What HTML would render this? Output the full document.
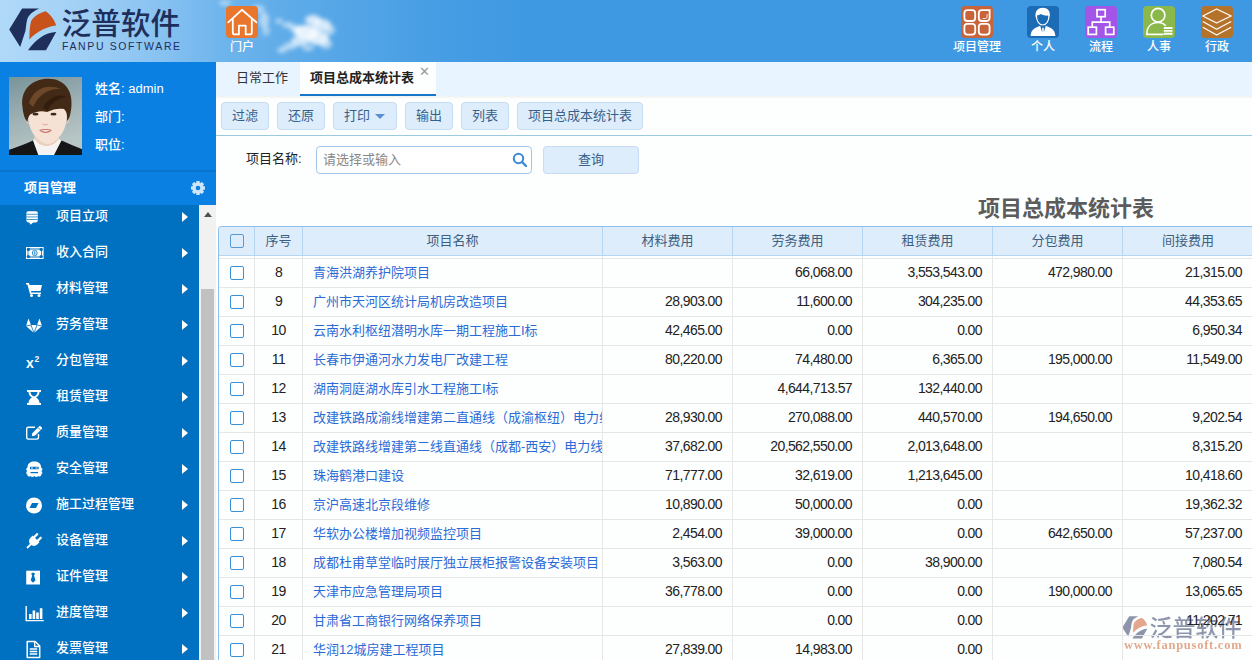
<!DOCTYPE html>
<html lang="zh-CN">
<head>
<meta charset="utf-8">
<title>项目总成本统计表</title>
<style>
*{box-sizing:border-box;margin:0;padding:0}
html,body{width:1252px;height:660px;overflow:hidden;background:#fdfefe}
body{font-family:"Liberation Sans","Noto Sans CJK SC",sans-serif;font-size:13px;color:#333;position:relative}
.abs{position:absolute}
/* header */
#hdr{position:absolute;left:0;top:0;width:1252px;height:62px;background:linear-gradient(90deg,#b0d9f8 0px,#a2d0f5 80px,#88c2f1 160px,#6fb5ed 220px,#60ace9 280px,#55a6e7 340px,#4ca1e5 400px,#449ce3 460px,#3f99e2 530px,#3f99e2 1252px);overflow:hidden}
#hdr .logo-cn{position:absolute;left:61.5px;top:6px;font-size:29.7px;line-height:36px;color:#1f2f5c;font-weight:500;letter-spacing:0px;white-space:nowrap}
#hdr .logo-en{position:absolute;left:62px;top:39px;font-size:10.5px;line-height:14px;color:#1f2f5c;letter-spacing:1.62px;white-space:nowrap}
.nav{position:absolute;top:6px;width:60px;text-align:center;color:#fff;font-size:12px;line-height:14px;font-weight:500}
.nav svg{display:block;margin:0 auto 2px}
/* sidebar */
#user{position:absolute;left:0;top:62px;width:216px;height:108px;background:#0a80e3}
#user .t{position:absolute;left:95px;color:#fff;font-size:13px;line-height:16px;white-space:nowrap;font-weight:500}
#mhead{position:absolute;left:0;top:170px;width:216px;height:35px;background:#0a80e3;border-top:2px solid #0a73cc;color:#fff;font-weight:bold;font-size:13px;line-height:32px;padding-left:24px}
#menu{position:absolute;left:0;top:205px;width:199px;height:455px;background:#0070c0;overflow:hidden}
#menu .mi{position:absolute;left:0;width:200px;height:36px;color:#fff;font-size:13px;line-height:36px;padding-left:56px;white-space:nowrap;font-weight:500}
#menu .mi .ar{position:absolute;left:182px;top:14px;width:0;height:0;border-left:6px solid #fff;border-top:5px solid transparent;border-bottom:5px solid transparent}
#menu .mi svg{position:absolute;left:25px;top:10px;overflow:visible}
#sbar{position:absolute;left:199px;top:205px;width:17px;height:455px;background:#f1f1f1}
#sbar .th{position:absolute;left:2px;top:84px;width:13px;height:371px;background:#c1c1c1}
#sbar .up{position:absolute;left:5px;top:7px;width:0;height:0;border-bottom:5px solid #505050;border-left:4px solid transparent;border-right:4px solid transparent}
/* main */
#tabs{position:absolute;left:216px;top:62px;width:1036px;height:34px;background:#e8f4ff}
#tabs .t1{position:absolute;left:20px;top:0;height:34px;line-height:32px;font-size:13px;color:#333}
#tabs .t2{position:absolute;left:84px;top:0;width:136px;height:34px;background:#fdfefe;border-bottom:2px solid #1877c9;line-height:32px;font-size:13px;font-weight:bold;color:#222;padding-left:10px;white-space:nowrap}
#tabs .x{position:absolute;left:119px;top:3px;font-size:13px;line-height:14px;color:#999;font-weight:normal}
#tbar{position:absolute;left:216px;top:96px;width:1036px;height:40px;background:#fdfefe;border-bottom:1px solid #9ccbe0;box-shadow:inset 0 3px 3px -2px rgba(0,0,0,.08)}
.btn{position:absolute;top:6px;height:28px;border:1px solid #c5dcf3;border-radius:4px;background:#deedfb;color:#365f8a;font-size:13px;line-height:25px;text-align:center;white-space:nowrap}
#flt .lbl{position:absolute;left:246px;top:150px;font-size:13px;line-height:18px;color:#222}
#flt .inp{position:absolute;left:316px;top:146px;width:216px;height:28px;border:1px solid #a3c6e8;border-radius:4px;background:#fff;color:#888;font-size:13px;line-height:25px;padding-left:6px}
#title{position:absolute;left:900px;top:194px;width:332px;text-align:center;font-size:22px;font-weight:bold;color:#5c5c5c;line-height:30px;white-space:nowrap}
/* table */
#grid{position:absolute;left:218px;top:226px;width:1034px;height:434px;border-left:1px solid #8ec0ea;border-top:1px solid #8ec0ea;background:transparent;overflow:hidden;z-index:1;border-radius:4px 0 0 0}
#gh{position:absolute;left:0;top:0;width:1034px;height:29px;z-index:2;background:#deedfb;border-bottom:1px solid #b5d6f2}
#gh div{position:absolute;top:0;height:28px;line-height:27px;text-align:center;color:#3d5f80;font-size:13px;border-right:1px solid #b5d6f2}
.cb{position:absolute;left:11px;width:14px;height:14px;border:1px solid #3a8fd9;border-radius:2px;background:#fff}
.row{position:absolute;left:0;width:1034px;height:29px;border-bottom:1px solid #e6e6e6;font-size:13px;line-height:28px;color:#222}
.row div{position:absolute;top:0;height:29px;border-right:1px solid #e6e6e6;white-space:nowrap;overflow:hidden}
.row .c0{left:0;width:36px}
.row .c1{left:36px;width:48px;text-align:center;font-size:14px;letter-spacing:-.6px;line-height:26px}
.row .c2{left:84px;width:300px;padding-left:10px;color:#2a6bd6}
.row .c3{font-size:14px;letter-spacing:-.6px;line-height:26px;left:384px;width:130px;text-align:right;padding-right:10px}
.row .c4{font-size:14px;letter-spacing:-.6px;line-height:26px;left:514px;width:130px;text-align:right;padding-right:10px}
.row .c5{font-size:14px;letter-spacing:-.6px;line-height:26px;left:644px;width:130px;text-align:right;padding-right:10px}
.row .c6{font-size:14px;letter-spacing:-.6px;line-height:26px;left:774px;width:130px;text-align:right;padding-right:10px}
.row .c7{font-size:14px;letter-spacing:-.6px;line-height:26px;left:904px;width:130px;text-align:right;padding-right:11px;border-right:none}
</style>
</head>
<body>
<div id="hdr">
<svg class="abs" style="left:0;top:0" width="1252" height="62" viewBox="0 0 1252 62">
<defs>
<filter id="bl" x="-20%" y="-20%" width="140%" height="140%"><feGaussianBlur stdDeviation="2"/></filter>
</defs>
<g filter="url(#bl)" fill="#fff">
<ellipse cx="225" cy="3" rx="6" ry="2.500" opacity=".5"/>
<ellipse cx="258" cy="9" rx="7" ry="4" opacity=".45"/>
<ellipse cx="264" cy="20" rx="5" ry="8" opacity=".5"/>
<ellipse cx="266" cy="31" rx="4" ry="5" opacity=".4"/>
<ellipse cx="279" cy="21" rx="4" ry="2.500" opacity=".5"/>
<ellipse cx="288" cy="25" rx="6" ry="3" opacity=".55"/>
<ellipse cx="296" cy="29" rx="6" ry="4" opacity=".6"/>
<ellipse cx="313" cy="20" rx="8" ry="5" opacity=".75"/>
<ellipse cx="322" cy="25" rx="9" ry="6" opacity=".75"/>
<ellipse cx="330" cy="30" rx="5" ry="5" opacity=".55"/>
<ellipse cx="306" cy="32" rx="12" ry="7" opacity=".85"/>
<ellipse cx="318" cy="38" rx="11" ry="7" opacity=".8"/>
<ellipse cx="300" cy="41" rx="9" ry="5" opacity=".7"/>
<ellipse cx="326" cy="44" rx="6" ry="5" opacity=".55"/>
<ellipse cx="290" cy="46" rx="7" ry="3.500" opacity=".55"/>
<ellipse cx="282" cy="50" rx="5" ry="3" opacity=".55"/>
<ellipse cx="308" cy="48" rx="6" ry="3" opacity=".5"/>
</g>
<!-- logo mark -->
<g id="lm">
<path d="M9.200 29.600 L22.100 8.500 L39.400 8.500 C33 11 28.500 15 27.200 19.500 C26 24 26 28 25.400 31 L20.200 47 Z" fill="#1f2f5c"/>
<path d="M29.300 39.400 C29.500 33 29.500 27 31 21.600 C33 17 39 13 45.500 11.300 C50 14 54 19 56.200 25.400 C47 26.500 37 31 29.300 39.400 Z" fill="#c8521c"/>
<path d="M28 50.200 L46 50.200 L56.200 31.900 C45 32.500 36 39 28 50.200 Z" fill="#1f2f5c"/>
</g>
</svg>
<div class="logo-cn">泛普软件</div>
<div class="logo-en">FANPU SOFTWARE</div>
<div class="nav" style="left:212px"><svg width="32" height="32" viewBox="0 0 32 32"><rect width="32" height="32" rx="4" fill="#e8762d"/><g fill="none" stroke="#fff" stroke-width="1.800" stroke-linejoin="round" stroke-linecap="round"><path d="M2.200 16.300 L15.900 3.800 L30.400 16.300"/><path d="M6.800 13.500 V26.400 a2 2 0 0 0 2 2 H12.900 V19.700 H19.700 V28.400 H23.800 a2 2 0 0 0 2 -2 V13.500"/></g></svg>门户</div>
<div class="nav" style="left:947px"><svg width="32" height="32" viewBox="0 0 32 32"><rect width="32" height="32" rx="4" fill="#c8643a"/><g fill="none" stroke="#fff" stroke-width="1.800"><rect x="3.400" y="4.200" width="10.800" height="10.800" rx="3"/><path d="M17.800 7.200 a3 3 0 0 1 3 -3 H28.600 V12 a3 3 0 0 1 -3 3 H20.800 a3 3 0 0 1 -3 -3 Z"/><rect x="3.400" y="17.800" width="10.800" height="10.800" rx="3"/><rect x="17.800" y="17.800" width="10.800" height="10.800" rx="3"/></g><path d="M21.500 12.500 H24.500 a1.500 1.500 0 0 0 1.500 -1.500 V8" fill="none" stroke="#fff" stroke-width=".8"/></svg>项目管理</div>
<div class="nav" style="left:1013px"><svg width="32" height="32" viewBox="0 0 32 32"><rect width="32" height="32" rx="4" fill="#1b6bb5"/><path d="M3.600 30 C4 25 6 22.800 11 20.800 L13.200 19.800 L15.200 26.500 L15.200 21.800 L16.800 21.800 L16.800 26.500 L18.800 19.800 L21 20.800 C26 22.800 28 25 28.400 30 Z" fill="#fff"/><path d="M9.400 6 V10 C9.300 15 12 19 15.700 19 C19.400 19 22.100 15 22 10 V6 Z" fill="#1b6bb5"/><path d="M9.400 9 C9.300 15 12 19 15.700 19 C19.400 19 22.100 15 22 9" fill="none" stroke="#fff" stroke-width="1.200"/><path d="M8.700 11.500 C7.600 4.500 11.500 1.800 15.800 1.800 C20.200 1.800 23.800 4.500 22.700 11.500 C22.400 10 21.800 9.300 20.800 9.600 C18.500 9.800 16 9 14 7.900 C12.800 8.800 11 9.300 10.200 9.400 C9.500 9.800 9 10.500 8.700 11.500 Z" fill="#fff"/></svg>个人</div>
<div class="nav" style="left:1071px"><svg width="32" height="32" viewBox="0 0 32 32"><rect width="32" height="32" rx="4" fill="#a355e8"/><g fill="none" stroke="#fff" stroke-width="1.700"><rect x="12" y="3.700" width="8.200" height="7"/><rect x="3.200" y="21.200" width="8.200" height="7.200"/><rect x="20.600" y="21.200" width="8.200" height="7.200"/><path d="M16.100 10.700 V16.200 M7.300 21.200 V16.200 H24.700 V21.200"/></g></svg>流程</div>
<div class="nav" style="left:1129px"><svg width="32" height="32" viewBox="0 0 32 32"><rect width="32" height="32" rx="4" fill="#8ab84a"/><g fill="none" stroke="#fff" stroke-width="1.700"><circle cx="15.100" cy="9.200" r="6.800"/><path d="M3.800 28.400 C3.800 20 9 16.500 15.100 16.500 C18.500 16.500 21 17.800 22.800 19.800"/><path d="M3 28.400 H20.500"/></g><path d="M20.800 22 H29.500 M20.800 24.900 H29.500 M20.800 27.800 H29.500" stroke="#fff" stroke-width="1.900"/></svg>人事</div>
<div class="nav" style="left:1187px"><svg width="32" height="32" viewBox="0 0 32 32"><rect width="32" height="32" rx="4" fill="#b5722a"/><g fill="none" stroke="#fff" stroke-width="1.300" stroke-linejoin="round"><path d="M15.600 3 L30.200 10 L15.600 17 L1.800 10 Z"/><path d="M1.800 15.500 L15.600 23.200 L30.200 15.500"/><path d="M1.800 21.300 L15.600 29 L30.200 21.300"/></g></svg>行政</div>
</div>
<div id="user">
<svg class="abs" style="left:9px;top:15px" width="73" height="78" viewBox="0 0 73 78">
<defs><linearGradient id="pbg" x1="0" y1="0" x2="0.300" y2="1"><stop offset="0" stop-color="#78939a"/><stop offset=".55" stop-color="#9fb2b5"/><stop offset="1" stop-color="#b9c6c6"/></linearGradient>
<filter id="pb" x="-10%" y="-10%" width="120%" height="120%"><feGaussianBlur stdDeviation=".7"/></filter>
<clipPath id="pc"><rect width="73" height="78"/></clipPath></defs>
<rect width="73" height="78" fill="url(#pbg)"/>
<g clip-path="url(#pc)"><g filter="url(#pb)">
<path d="M-2 80 V73.500 C8 70 17 67 24 63.500 L30 70 L36 80 L43 70 L52.500 63.500 C60 67 68 70 75 73 V80 Z" fill="#121318"/>
<path d="M24 63.500 L27 60 L47 60 L52.500 63.500 L44 80 L30 80 Z" fill="#f6f4f2"/>
<path d="M25.500 52 H50 V62 C46 67 42 69 38 69 C33 69 29 67 25.500 62 Z" fill="#ecd0bd"/>
<path d="M19 34 C19 28 24 24 38 24 C52 24 58 28 58 34 C58 46 56 54 50 60 C46 64.500 42 67 38.500 67 C35 67 31 64.500 27 60 C21 54 19 46 19 34 Z" fill="#f6e2d4"/>
<path d="M18 40 C16 40 16 46 19.500 47 Z M59 40 C61 40 61 46 57.500 47 Z" fill="#e8c4ae"/>
<path d="M13.500 30 C11 12 24 1.500 40 1.800 C54 2 63.500 12 62.500 28 C62 36 60.500 42 58 44 C58.500 38 57.500 34 55 32 C50 31 44 32 38 35 C32 33 26 35 22 37 C20 38 18.500 42 18.500 45 C15.500 42 14 36 13.500 30 Z" fill="#432a15"/>
<path d="M20 26 C24 12 38 6 52 12 C42 11 30 16 24 30 Z" fill="#7a5230" opacity=".75"/>
<path d="M34 30 C40 20 50 16 58 20 C52 20 44 24 38 34 Z" fill="#2a190b" opacity=".6"/>
<path d="M30 53 C34 51.500 39 51.500 43 53 C40 57 33.500 57 30 53 Z" fill="#c9706a"/>
<path d="M31.500 53.500 C35 52.800 38.500 52.800 41.500 53.500 C38.500 55 34.500 55 31.500 53.500 Z" fill="#f7efec"/>
<ellipse cx="26.500" cy="37.200" rx="3" ry="1.400" fill="#3a2a22"/><ellipse cx="44.500" cy="37.200" rx="3" ry="1.400" fill="#3a2a22"/>
<path d="M33.500 47 C35 48 37.500 48 39 47" stroke="#d9a892" stroke-width="1" fill="none"/>
</g></g>
</svg>
<div class="t" style="top:19px">姓名: admin</div>
<div class="t" style="top:47px">部门:</div>
<div class="t" style="top:75px">职位:</div>
</div>
<div id="mhead">项目管理<svg class="abs" style="left:190px;top:8px" width="16" height="16" viewBox="0 0 16 16"><g fill="#cfe6fa"><circle cx="8" cy="8" r="5.600"/><g id="tt"><rect x="6.300" y="1" width="3.400" height="14" rx=".6"/></g><rect x="6.300" y="1" width="3.400" height="14" rx=".6" transform="rotate(45 8 8)"/><rect x="6.300" y="1" width="3.400" height="14" rx=".6" transform="rotate(90 8 8)"/><rect x="6.300" y="1" width="3.400" height="14" rx=".6" transform="rotate(135 8 8)"/></g><circle cx="8" cy="8" r="2.300" fill="#0a80e3"/></svg></div>
<div id="menu">
<div class="mi" style="top:-7px"><svg width="19" height="19" viewBox="0 0 19 19"><rect x="1.400" y="3.200" width="11.400" height="11.200" rx="1.800" fill="#fff"/><path d="M4 14 h4.500 l-2.800 2.800 z" fill="#fff"/><path d="M1.400 6.300 h11.400 M1.400 8.900 h11.400 M1.400 11.500 h11.400" stroke="#0070c0" stroke-width=".7"/></svg>项目立项<span class="ar"></span></div>
<div class="mi" style="top:29px"><svg width="19" height="19" viewBox="0 0 19 19"><path d="M1 3 h17.600 v12 h-17.600 z M2.600 4.600 v8.800 h14.400 v-8.800 z" fill="#fff" fill-rule="evenodd"/><path d="M3.400 5.400 h12.800 v7.200 h-12.800 z" fill="#fff"/><circle cx="3.400" cy="5.400" r="1.700" fill="#0070c0"/><circle cx="16.200" cy="5.400" r="1.700" fill="#0070c0"/><circle cx="3.400" cy="12.600" r="1.700" fill="#0070c0"/><circle cx="16.200" cy="12.600" r="1.700" fill="#0070c0"/><ellipse cx="9.800" cy="9" rx="2.700" ry="3.100" fill="#0070c0"/><ellipse cx="9.800" cy="9" rx="1.900" ry="2.400" fill="#fff"/><rect x="9.300" y="7.300" width="1" height="3.400" fill="#0070c0"/></svg>收入合同<span class="ar"></span></div>
<div class="mi" style="top:65px"><svg width="19" height="19" viewBox="0 0 19 19"><path d="M1 3 h3 l.6 2 h12.400 l-1.500 6 h-9.500 l.4 1.500 h9.600 v1.500 h-11 l-2.600 -9.500 h-1.400 z" fill="#fff"/><circle cx="6.500" cy="15.500" r="1.500" fill="#fff"/><circle cx="14" cy="15.500" r="1.500" fill="#fff"/></svg>材料管理<span class="ar"></span></div>
<div class="mi" style="top:101px"><svg width="19" height="19" viewBox="0 0 19 19"><path d="M9 17 L1 10 L3.500 2.500 L6 9 H12 L14.500 2.500 L17 10 Z" fill="#fff"/><path d="M9 17 L6 9 M9 17 L12 9 M1 10 L6 9 M17 10 L12 9" stroke="#0070c0" stroke-width=".8" fill="none"/></svg>劳务管理<span class="ar"></span></div>
<div class="mi" style="top:137px"><svg width="19" height="19" viewBox="0 0 19 19"><text x="1" y="16" font-family="Liberation Sans,sans-serif" font-weight="bold" font-size="14" fill="#fff">x</text><text x="9.500" y="9.500" font-family="Liberation Sans,sans-serif" font-weight="bold" font-size="8.500" fill="#fff">2</text></svg>分包管理<span class="ar"></span></div>
<div class="mi" style="top:173px"><svg width="19" height="19" viewBox="0 0 19 19"><path d="M2 2 h14 v2 h-1.500 c0 3 -2 4.500 -3.500 5.500 c1.500 1 3.500 2.500 3.500 5.500 h1.500 v2 h-14 v-2 h1.500 c0 -3 2 -4.500 3.500 -5.500 c-1.500 -1 -3.500 -2.500 -3.500 -5.500 h-1.500 z M5.500 4 c0 2 1.500 3.500 3.500 4.500 c2 -1 3.500 -2.500 3.500 -4.500 z" fill="#fff" fill-rule="evenodd"/></svg>租赁管理<span class="ar"></span></div>
<div class="mi" style="top:209px"><svg width="19" height="19" viewBox="0 0 19 19"><path d="M13.500 10 v3.300 a1.800 1.800 0 0 1 -1.800 1.800 h-8.200 a1.800 1.800 0 0 1 -1.800 -1.800 v-8.200 a1.800 1.800 0 0 1 1.800 -1.800 h6.500" fill="none" stroke="#fff" stroke-width="1.400"/><path d="M7.300 9.200 L14.200 2.300 a1 1 0 0 1 1.400 0 L16.800 3.500 a1 1 0 0 1 0 1.400 L9.900 11.800 L6.800 12.300 Z" fill="#fff"/><path d="M13 3.500 L15.600 6.100" stroke="#0070c0" stroke-width=".8"/></svg>质量管理<span class="ar"></span></div>
<div class="mi" style="top:245px"><svg width="19" height="19" viewBox="0 0 19 19"><path d="M2.500 7.500 C2.500 3.500 5.500 1.600 9.300 1.600 C13.100 1.600 16.100 3.500 16.100 7.500 C17.800 8 17.800 10.500 16.300 11 C17.800 11.800 17.600 14 16.200 14.600 C16.600 16.600 14.300 17 13.200 16 C12 17.200 10.500 17.200 9.300 16 C8.100 17.200 6.600 17.200 5.400 16 C4.300 17 2 16.600 2.400 14.600 C1 14 .800 11.800 2.300 11 C.800 10.500 .800 8 2.500 7.500 Z" fill="#fff"/><rect x="5" y="6.700" width="8.600" height="2.600" rx=".6" fill="#0070c0"/><path d="M6 8 h2 M10.600 8 h2" stroke="#fff" stroke-width=".9"/><path d="M5.500 12.600 h7.600" stroke="#0070c0" stroke-width="1.300"/></svg>安全管理<span class="ar"></span></div>
<div class="mi" style="top:281px"><svg width="19" height="19" viewBox="0 0 19 19"><circle cx="9" cy="9.500" r="8" fill="#fff"/><path d="M7 7 h6.500 l-2.500 5 h-6.500 z" fill="#0070c0"/></svg>施工过程管理<span class="ar"></span></div>
<div class="mi" style="top:317px"><svg width="19" height="19" viewBox="0 0 19 19"><g transform="translate(10.200,7.800) rotate(45)" fill="#fff"><path d="M-4.800 -1.200 H4.800 V1.500 C4.800 4.800 2.600 6.600 0 6.600 C-2.600 6.600 -4.800 4.800 -4.800 1.500 Z"/><rect x="-3.700" y="-6.400" width="2.300" height="6" rx="1"/><rect x="1.400" y="-6.400" width="2.300" height="6" rx="1"/><rect x="-.900" y="6" width="1.800" height="5.600"/></g></svg>设备管理<span class="ar"></span></div>
<div class="mi" style="top:353px"><svg width="19" height="19" viewBox="0 0 19 19"><path d="M1.200 2.700 h13.800 v13.800 h-13.800 z" fill="#fff"/><path d="M6.900 4.800 h2.400 l.6 1.400 l-.9 1.300 l1.500 4.700 l-2.400 2.500 l-2.400 -2.500 l1.500 -4.700 l-.9 -1.300 z" fill="#0070c0"/></svg>证件管理<span class="ar"></span></div>
<div class="mi" style="top:389px"><svg width="19" height="19" viewBox="0 0 19 19"><path d="M1.200 2 v14.600 h17.600" fill="none" stroke="#fff" stroke-width="1.400"/><path d="M4 10 h2.600 v5 h-2.600 z M7.600 6.500 h2.600 v8.500 h-2.600 z M11.200 8.500 h2.600 v6.500 h-2.600 z M14.800 4.300 h2.600 v10.700 h-2.600 z" fill="#fff"/></svg>进度管理<span class="ar"></span></div>
<div class="mi" style="top:425px"><svg width="19" height="19" viewBox="0 0 19 19"><path d="M2.200 1.500 h8 l4.500 4.500 v11.500 h-12.500 z" fill="none" stroke="#fff" stroke-width="1.500" stroke-linejoin="round"/><path d="M9.700 1.500 v5 h5" fill="none" stroke="#fff" stroke-width="1.300"/><path d="M4.700 9 h7.500 M4.700 11.500 h7.500 M4.700 14 h7.500" stroke="#fff" stroke-width="1.500"/></svg>发票管理<span class="ar"></span></div>
</div>
<div id="sbar"><div class="up"></div><div class="th"></div></div>
<div id="tabs"><div class="t1">日常工作</div><div class="t2">项目总成本统计表<span class="x">✕</span></div></div>
<div id="tbar">
<div class="btn" style="left:5px;width:48px">过滤</div>
<div class="btn" style="left:61px;width:48px">还原</div>
<div class="btn" style="left:117px;width:64px;padding-right:16px">打印<span style="position:absolute;left:41px;top:11px;width:0;height:0;border-top:5px solid #5a8fd0;border-left:5px solid transparent;border-right:5px solid transparent"></span></div>
<div class="btn" style="left:189px;width:48px">输出</div>
<div class="btn" style="left:245px;width:48px">列表</div>
<div class="btn" style="left:301px;width:126px">项目总成本统计表</div>
</div>
<div id="flt"><div class="lbl">项目名称:</div><div class="inp">请选择或输入<svg class="abs" style="left:195px;top:5px" width="16" height="16" viewBox="0 0 16 16"><circle cx="6.500" cy="6.500" r="4.700" fill="none" stroke="#3a8ad8" stroke-width="2"/><path d="M10 10 L14 14" stroke="#3a8ad8" stroke-width="2.400" stroke-linecap="round"/></svg></div><div class="btn" style="left:543px;top:146px;width:96px">查询</div></div>
<div id="title">项目总成本统计表</div>
<div id="wm" style="position:absolute;left:1120px;top:610px;width:132px;height:50px;opacity:.5;pointer-events:none;z-index:0">
<svg class="abs" style="left:0;top:0" width="132" height="50" viewBox="0 0 132 50"><g transform="translate(-2.500,1.800) scale(.53)">
<path d="M9.200 29.600 L22.100 8.500 L39.400 8.500 C33 11 28.500 15 27.200 19.500 C26 24 26 28 25.400 31 L20.200 47 Z" fill="#1f2f5c"/>
<path d="M29.300 39.400 C29.500 33 29.500 27 31 21.600 C33 17 39 13 45.500 11.300 C50 14 54 19 56.200 25.400 C47 26.500 37 31 29.300 39.400 Z" fill="#c8521c"/>
<path d="M28 50.200 L46 50.200 L56.200 31.900 C45 32.500 36 39 28 50.200 Z" fill="#1f2f5c"/></g></svg>
<div style="position:absolute;left:29.500px;top:2.500px;font-size:23px;line-height:30px;color:#1f2f5c;font-weight:500;white-space:nowrap">泛普软件</div>
<div style="position:absolute;left:4px;top:26.500px;font-family:'Liberation Serif',serif;font-weight:bold;font-size:12.500px;line-height:16px;letter-spacing:.75px;color:#c8521c;white-space:nowrap">www.fanpusoft.com</div>
</div>
<div id="grid">
<div id="gh"><div style="left:0;width:36px"><span class="cb" style="top:7px;background:transparent;border-color:#5a9ad4"></span></div><div style="left:36px;width:48px">序号</div><div style="left:84px;width:300px">项目名称</div><div style="left:384px;width:130px">材料费用</div><div style="left:514px;width:130px">劳务费用</div><div style="left:644px;width:130px">租赁费用</div><div style="left:774px;width:130px">分包费用</div><div style="left:904px;width:130px;border-right:none">间接费用</div></div>
<div class="row" style="top:3px"><div class="c0"></div><div class="c1"></div><div class="c2"></div><div class="c3"></div><div class="c4"></div><div class="c5"></div><div class="c6"></div><div class="c7"></div></div>
<div class="row" style="top:32px"><div class="c0"><span class="cb" style="top:7px"></span></div><div class="c1">8</div><div class="c2">青海洪湖养护院项目</div><div class="c3"></div><div class="c4">66,068.00</div><div class="c5">3,553,543.00</div><div class="c6">472,980.00</div><div class="c7">21,315.00</div></div>
<div class="row" style="top:61px"><div class="c0"><span class="cb" style="top:7px"></span></div><div class="c1">9</div><div class="c2">广州市天河区统计局机房改造项目</div><div class="c3">28,903.00</div><div class="c4">11,600.00</div><div class="c5">304,235.00</div><div class="c6"></div><div class="c7">44,353.65</div></div>
<div class="row" style="top:90px"><div class="c0"><span class="cb" style="top:7px"></span></div><div class="c1">10</div><div class="c2">云南水利枢纽潜明水库一期工程施工I标</div><div class="c3">42,465.00</div><div class="c4">0.00</div><div class="c5">0.00</div><div class="c6"></div><div class="c7">6,950.34</div></div>
<div class="row" style="top:119px"><div class="c0"><span class="cb" style="top:7px"></span></div><div class="c1">11</div><div class="c2">长春市伊通河水力发电厂改建工程</div><div class="c3">80,220.00</div><div class="c4">74,480.00</div><div class="c5">6,365.00</div><div class="c6">195,000.00</div><div class="c7">11,549.00</div></div>
<div class="row" style="top:148px"><div class="c0"><span class="cb" style="top:7px"></span></div><div class="c1">12</div><div class="c2">湖南洞庭湖水库引水工程施工I标</div><div class="c3"></div><div class="c4">4,644,713.57</div><div class="c5">132,440.00</div><div class="c6"></div><div class="c7"></div></div>
<div class="row" style="top:177px"><div class="c0"><span class="cb" style="top:7px"></span></div><div class="c1">13</div><div class="c2">改建铁路成渝线增建第二直通线（成渝枢纽）电力线</div><div class="c3">28,930.00</div><div class="c4">270,088.00</div><div class="c5">440,570.00</div><div class="c6">194,650.00</div><div class="c7">9,202.54</div></div>
<div class="row" style="top:206px"><div class="c0"><span class="cb" style="top:7px"></span></div><div class="c1">14</div><div class="c2">改建铁路线增建第二线直通线（成都-西安）电力线</div><div class="c3">37,682.00</div><div class="c4">20,562,550.00</div><div class="c5">2,013,648.00</div><div class="c6"></div><div class="c7">8,315.20</div></div>
<div class="row" style="top:235px"><div class="c0"><span class="cb" style="top:7px"></span></div><div class="c1">15</div><div class="c2">珠海鹤港口建设</div><div class="c3">71,777.00</div><div class="c4">32,619.00</div><div class="c5">1,213,645.00</div><div class="c6"></div><div class="c7">10,418.60</div></div>
<div class="row" style="top:264px"><div class="c0"><span class="cb" style="top:7px"></span></div><div class="c1">16</div><div class="c2">京沪高速北京段维修</div><div class="c3">10,890.00</div><div class="c4">50,000.00</div><div class="c5">0.00</div><div class="c6"></div><div class="c7">19,362.32</div></div>
<div class="row" style="top:293px"><div class="c0"><span class="cb" style="top:7px"></span></div><div class="c1">17</div><div class="c2">华软办公楼增加视频监控项目</div><div class="c3">2,454.00</div><div class="c4">39,000.00</div><div class="c5">0.00</div><div class="c6">642,650.00</div><div class="c7">57,237.00</div></div>
<div class="row" style="top:322px"><div class="c0"><span class="cb" style="top:7px"></span></div><div class="c1">18</div><div class="c2">成都杜甫草堂临时展厅独立展柜报警设备安装项目</div><div class="c3">3,563.00</div><div class="c4">0.00</div><div class="c5">38,900.00</div><div class="c6"></div><div class="c7">7,080.54</div></div>
<div class="row" style="top:351px"><div class="c0"><span class="cb" style="top:7px"></span></div><div class="c1">19</div><div class="c2">天津市应急管理局项目</div><div class="c3">36,778.00</div><div class="c4">0.00</div><div class="c5">0.00</div><div class="c6">190,000.00</div><div class="c7">13,065.65</div></div>
<div class="row" style="top:380px"><div class="c0"><span class="cb" style="top:7px"></span></div><div class="c1">20</div><div class="c2">甘肃省工商银行网络保养项目</div><div class="c3"></div><div class="c4">0.00</div><div class="c5">0.00</div><div class="c6"></div><div class="c7">11,202.71</div></div>
<div class="row" style="top:409px"><div class="c0"><span class="cb" style="top:7px"></span></div><div class="c1">21</div><div class="c2">华润12城房建工程项目</div><div class="c3">27,839.00</div><div class="c4">14,983.00</div><div class="c5">0.00</div><div class="c6"></div><div class="c7"></div></div>
</div>
</body>
</html>
